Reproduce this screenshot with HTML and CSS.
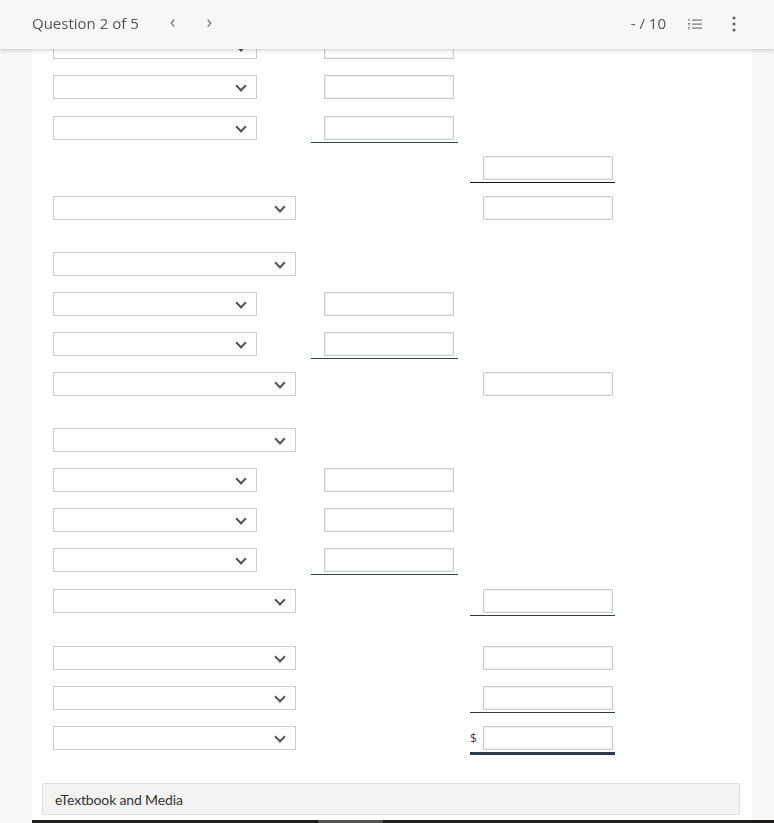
FILE: index.html
```html
<!DOCTYPE html>
<html>
<head>
<meta charset="utf-8">
<link rel="stylesheet" href="styles.css">
</head>
<body>
<header class="topbar">
  <div class="qnav">
    <span class="qtitle">Question 2 of 5</span>
    <span class="arrow">&lsaquo;</span>
    <span class="arrow">&rsaquo;</span>
  </div>
  <div class="tools">
    <span class="score">- / 10</span>
    <svg class="listicon" width="14" height="12" viewBox="0 0 14 12">
      <g fill="#777">
        <rect x="0.5" y="1" width="1.2" height="2"/>
        <rect x="0" y="5" width="2" height="1"/><rect x="0" y="6.5" width="2" height="0.8"/>
        <rect x="0" y="9" width="2" height="0.8"/><rect x="0" y="10.5" width="2" height="0.8"/>
        <rect x="4" y="1.5" width="10" height="1.2"/>
        <rect x="4" y="5.5" width="10" height="1.2"/>
        <rect x="4" y="9.5" width="10" height="1.2"/>
      </g>
    </svg>
    <svg class="kebab" width="4" height="16" viewBox="0 0 4 16">
      <g fill="#666"><circle cx="2" cy="2" r="1.6"/><circle cx="2" cy="8" r="1.6"/><circle cx="2" cy="14" r="1.6"/></g>
    </svg>
  </div>
</header>

<main class="panel">
  <div class="rows">
    <div class="row"><div class="c1"><div class="sel narrow"></div></div><div class="c2"><div class="inp"></div></div></div>
    <div class="row"><div class="c1"><div class="sel narrow"></div></div><div class="c2"><div class="inp"></div></div></div>
    <div class="row p1"><div class="c1"><div class="sel narrow"></div></div><div class="c2 ul"><div class="inp"></div></div></div>
    <div class="row"><div class="c1"></div><div class="c2"></div><div class="c3 ul dark"><div class="inp"></div></div></div>
    <div class="row"><div class="c1"><div class="sel wide"></div></div><div class="c2"></div><div class="c3"><div class="inp"></div></div></div>

    <div class="row sec"><div class="c1"><div class="sel wide"></div></div></div>
    <div class="row"><div class="c1"><div class="sel narrow"></div></div><div class="c2"><div class="inp"></div></div></div>
    <div class="row"><div class="c1"><div class="sel narrow"></div></div><div class="c2 ul"><div class="inp"></div></div></div>
    <div class="row"><div class="c1"><div class="sel wide"></div></div><div class="c2"></div><div class="c3"><div class="inp"></div></div></div>

    <div class="row sec"><div class="c1"><div class="sel wide"></div></div></div>
    <div class="row"><div class="c1"><div class="sel narrow"></div></div><div class="c2"><div class="inp"></div></div></div>
    <div class="row"><div class="c1"><div class="sel narrow"></div></div><div class="c2"><div class="inp"></div></div></div>
    <div class="row"><div class="c1"><div class="sel narrow"></div></div><div class="c2 ul"><div class="inp"></div></div></div>
    <div class="row p1"><div class="c1"><div class="sel wide"></div></div><div class="c2"></div><div class="c3 ul"><div class="inp"></div></div></div>

    <div class="row sec p1"><div class="c1"><div class="sel wide"></div></div><div class="c2"></div><div class="c3"><div class="inp"></div></div></div>
    <div class="row"><div class="c1"><div class="sel wide"></div></div><div class="c2"></div><div class="c3 ul"><div class="inp"></div></div></div>
    <div class="row"><div class="c1"><div class="sel wide"></div></div><div class="c2"></div><div class="c3 dbl"><span class="dollar">$</span><div class="inp"></div></div></div>
  </div>

  <div class="media">eTextbook and Media</div>
  <div class="bottomstrip"><span class="seg"></span></div>
</main>
</body>
</html>
```

FILE: styles.css
```css
* { box-sizing: border-box; }
html, body { margin: 0; height: 823px; overflow: hidden; }
body {
  background: #f7f7f7;
  font-family: "Open Sans", "Liberation Sans", sans-serif;
  color: #555;
}
.topbar {
  position: fixed;
  top: 0; left: 0; right: 0;
  height: 49px;
  background: #f7f7f7;
  box-shadow: 0 1px 4px rgba(0,0,0,0.22);
  display: flex;
  align-items: center;
  justify-content: space-between;
  padding: 0 32px 3px 32px;
  z-index: 10;
}
.qnav { display: flex; align-items: center; }
.qtitle { font-size: 15px; color: #555; margin-right: 31px; }
.arrow { font-size: 19px; color: #777; margin-right: 31px; line-height: 1; padding-bottom: 3px; }
.tools { display: flex; align-items: center; }
.score { font-size: 15px; color: #555; margin-right: 22px; }
.listicon { margin-right: 30px; margin-top: 2px; }
.kebab { margin-right: 6px; margin-top: 2px; }

.panel {
  margin-left: 32px;
  width: 720px;
  background: #fff;
  padding: 35px 0 0 0;
  height: 823px;
  position: relative;
}
.rows { padding-left: 21px; display: flex; flex-direction: column; }
.row { display: flex; height: 24px; margin-top: 16px; }
.row:first-child { margin-top: 0; }
.row.sec { margin-top: 32px; }
.row.p1 { margin-top: 17px; }
.row.sec.p1 { margin-top: 33px; }
.c1 { width: 258px; flex: none; }
.c2 { width: 147px; flex: none; padding-left: 13px; height: 27px; }
.c3 { width: 145px; flex: none; margin-left: 12px; padding-left: 13px; height: 27px; position: relative; }
.c2.ul { border-bottom: 1px solid #34424e; }
.c3.ul { border-bottom: 1px solid #2f3d48; }
.c3.ul.dark { border-bottom-color: #111; }
.c3.dbl { border-bottom: 3px solid #2f3d48; height: 29px; }
.dollar {
  position: absolute;
  left: 0; top: 4px;
  font-size: 12px;
  color: #444;
}
.sel {
  height: 24px;
  border: 1px solid #ccc;
  background: #fff;
  position: relative;
}
.sel::after {
  content: "";
  position: absolute;
  right: 11px;
  top: 6px;
  width: 6px;
  height: 6px;
  border-right: 2px solid #555;
  border-bottom: 2px solid #555;
  transform: rotate(45deg);
}
.sel.narrow { width: 204px; }
.sel.wide { width: 243px; }
.inp {
  width: 130px;
  height: 24px;
  border: 1px solid #cdcdcd;
  box-shadow: inset 0 0 0 1px #f0f0f0;
  background: #fff;
}
.media {
  margin: 33px 0 0 10px;
  width: 698px;
  height: 32px;
  background: #f3f3f3;
  border: 1px solid #dedede;
  border-radius: 2px;
  font-family: Lato, "Liberation Sans", sans-serif;
  font-size: 14px;
  color: #333;
  padding: 7px 0 0 12px;
  letter-spacing: -0.15px;
}
.bottomstrip {
  position: absolute;
  left: 0; right: -22px; top: 820px;
  height: 3px;
  background: #1e1c16;
}
.bottomstrip .seg {
  position: absolute;
  left: 286px; width: 65px; top: 0; bottom: 0;
  background: #55554f;
}
```
